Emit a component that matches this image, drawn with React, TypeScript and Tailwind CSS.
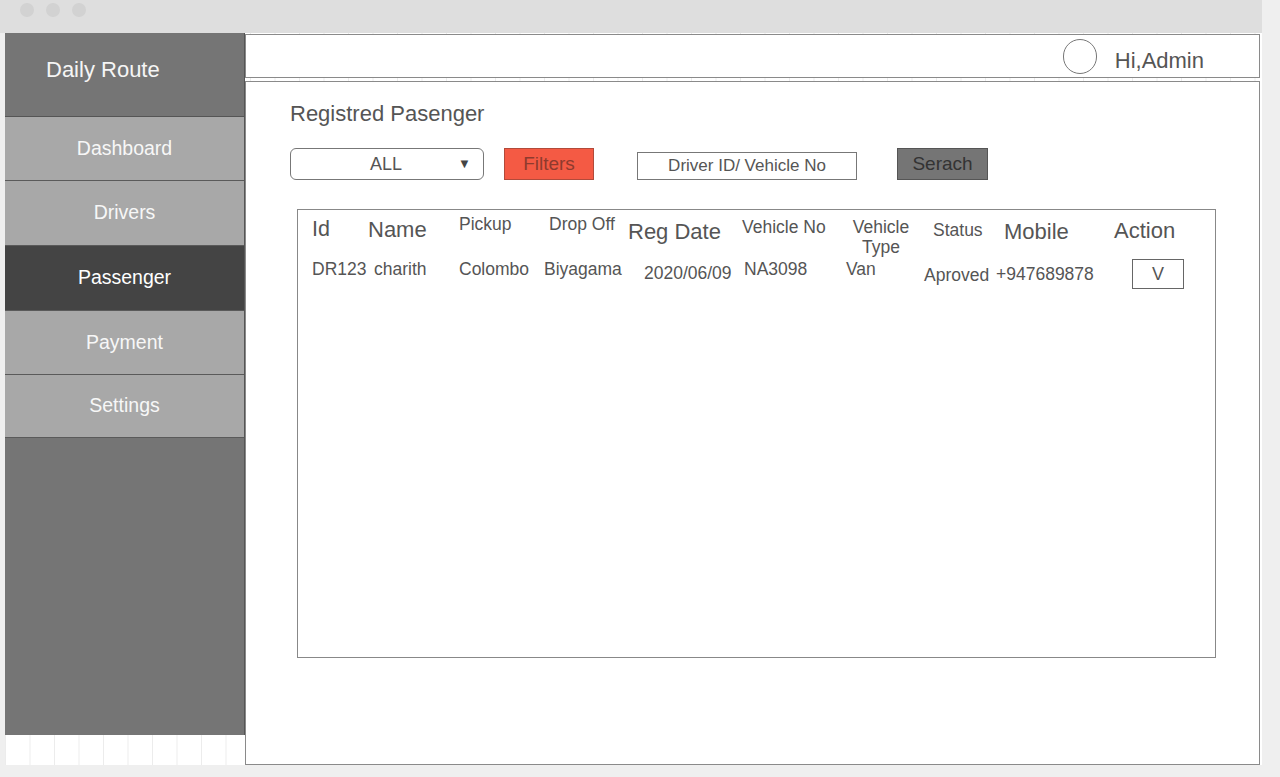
import React from "react";

const font = { fontFamily: '"Liberation Sans", Arial, sans-serif' };

function NavItem({ label, active, h }: { label: string; active?: boolean; h: string }) {
  return (
    <div
      className={
        h +
        " flex items-center justify-center text-[19.5px] border-b border-[#5a5a5a] " +
        (active ? "bg-[#444444] text-white" : "bg-[#a8a8a8] text-[#f7f7f7]")
      }
    >
      {label}
    </div>
  );
}

export default function App() {
  return (
    <div className="w-[1280px] h-[777px] bg-[#efefef] overflow-hidden" style={font}>
      <div className="w-[1262px] h-[33px] bg-[#dedede] flex items-start gap-[12px] pl-[20px] pt-[3px]">
        <div className="w-[14px] h-[14px] rounded-full bg-[#d2d2d2]" />
        <div className="w-[14px] h-[14px] rounded-full bg-[#d2d2d2]" />
        <div className="w-[14px] h-[14px] rounded-full bg-[#d2d2d2]" />
      </div>
      <div className="ml-[5px] w-[1257px] h-[732px] flex bg-white bg-[linear-gradient(to_right,#ececec_1px,transparent_1px)] bg-[size:24.5px_100%]">
        <div className="w-[240px] flex flex-col">
          <div className="h-[702px] flex flex-col bg-[#757575] border-r border-[#555]">
            <div className="h-[84px] flex items-center pl-[41px] pb-[10px] text-[22px] text-[#f5f5f5] border-b border-[#555]">
              Daily Route
            </div>
            <NavItem label="Dashboard" h="h-[64px]" />
            <NavItem label="Drivers" h="h-[65px]" />
            <NavItem label="Passenger" h="h-[65px]" active />
            <NavItem label="Payment" h="h-[64px]" />
            <NavItem label="Settings" h="h-[63px]" />
          </div>
        </div>
        <div className="w-[1015px] flex flex-col">
          <div className="mt-[1px] h-[44px] bg-white border border-[#8a8a8a] flex items-center justify-end pr-[55px]">
            <div className="w-[34px] h-[35px] rounded-full border border-[#777] mr-[18px]" />
            <span className="text-[22px] text-[#555] pt-[9px]">Hi,Admin</span>
          </div>
          <div className="mt-[3px] flex-1 bg-white border border-[#8a8a8a] pl-[44px] pt-[18px]">
            <div className="text-[22px] text-[#555] leading-[28px]">Registred Pasenger</div>
            <div className="flex items-center mt-[20px] h-[32px]">
              <div className="w-[194px] h-[32px] border border-[#777] rounded-[6px] flex items-center relative">
                <span className="w-full text-center text-[18px] text-[#555] pr-[2px]">ALL</span>
                <span className="absolute left-[167px] text-[13px] text-[#444]">▼</span>
              </div>
              <div className="ml-[20px] w-[90px] h-[32px] bg-[#f45a44] border border-[#b24a3a] flex items-center justify-center text-[19px] text-[#8e3a2e]">
                Filters
              </div>
              <div className="ml-[43px] w-[220px] h-[28px] mt-[3px] border border-[#777] flex items-center justify-center text-[17px] text-[#555]">
                Driver ID/ Vehicle No
              </div>
              <div className="ml-[40px] w-[91px] h-[32px] bg-[#757575] border border-[#555] flex items-center justify-center text-[19px] text-[#333]">
                Serach
              </div>
            </div>
            <div className="ml-[7px] mt-[29px] w-[919px] h-[449px] border border-[#888] text-[#555]">
              <div className="flex items-start h-[46px]">
                <div className="w-[70px] pl-[14px] mt-[3px] text-[21.5px]">Id</div>
                <div className="w-[91px] mt-[3px] text-[22px]">Name</div>
                <div className="w-[90px] mt-[1px] text-[17.5px]">Pickup</div>
                <div className="w-[79px] mt-[1px] text-[17.5px]">Drop Off</div>
                <div className="w-[114px] mt-[5px] text-[22px]">Reg Date</div>
                <div className="w-[100px] mt-[4px] text-[17.5px]">Vehicle No</div>
                <div className="w-[78px] mt-[7px] text-[17.5px] leading-[20px] text-center">
                  Vehicle
                  <br />
                  Type
                </div>
                <div className="w-[71px] ml-[12px] mt-[7px] pl-[1px] text-[17.5px]">Status</div>
                <div className="w-[111px] mt-[5px] pl-[1px] text-[22px]">Mobile</div>
                <div className="mt-[4px] text-[22px]">Action</div>
              </div>
              <div className="flex items-start">
                <div className="w-[76px] pl-[14px] text-[17.5px]">DR123</div>
                <div className="w-[85px] text-[17.5px]">charith</div>
                <div className="w-[85px] text-[17.5px]">Colombo</div>
                <div className="w-[100px] text-[17.5px]">Biyagama</div>
                <div className="w-[100px] mt-[4px] text-[17.5px]">2020/06/09</div>
                <div className="w-[102px] text-[17.5px]">NA3098</div>
                <div className="w-[78px] text-[17.5px]">Van</div>
                <div className="w-[72px] mt-[6px] text-[17.5px]">Aproved</div>
                <div className="w-[136px] mt-[5px] text-[17.5px]">+947689878</div>
                <div className="w-[52px] h-[30px] mt-[3px] border border-[#666] flex items-center justify-center text-[18px]">
                  V
                </div>
              </div>
            </div>
          </div>
        </div>
      </div>
    </div>
  );
}
